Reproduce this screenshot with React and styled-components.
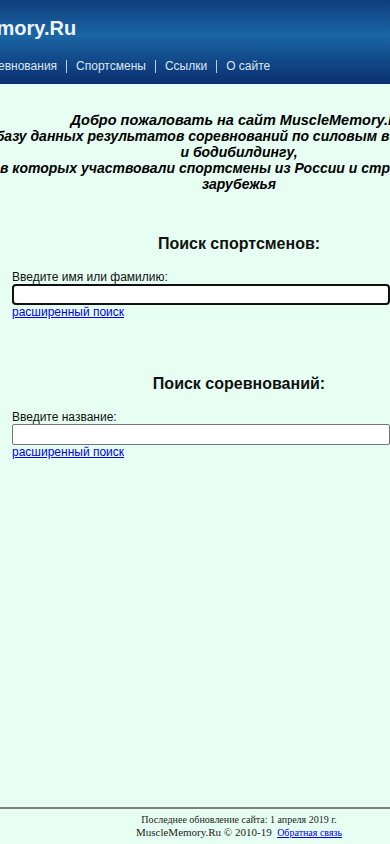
import React from 'react';
import styled, { createGlobalStyle } from 'styled-components';

const GlobalStyle = createGlobalStyle`
    html, body {
        margin: 0;
        padding: 0;
        overflow-x: hidden;
        background: #e6fff2;
    }
    body {
        font-family: "Liberation Sans", Arial, sans-serif;
    }
`;

//styled
const Page = styled.div`
    min-height: 100vh;
    display: flex;
    flex-direction: column;
`;
const Header = styled.header`
    height: 84px;
    background: linear-gradient(to bottom, #0f3d7e 0%, #1a66a4 42%, #134c8c 68%, #0a3070 100%);
    overflow: hidden;
`;
const HeaderInner = styled.div`
    margin-left: -99px;
    display: flex;
    flex-direction: column;
`;
const Logo = styled.div`
    margin-top: 16px;
    font-size: 20px;
    line-height: 24px;
    font-weight: bold;
    color: #eef3fa;
    white-space: nowrap;
`;
const Nav = styled.nav`
    margin-top: 19px;
    padding-left: 75px;
    display: flex;
    align-items: center;
    gap: 9px;
    font-size: 12px;
    line-height: 14px;
    white-space: nowrap;
`;
const NavLink = styled.span`
    color: #dde7f3;
`;
const Sep = styled.span`
    width: 1px;
    height: 13px;
    background: #b9cde6;
`;
const Content = styled.main`
    margin-left: 12px;
    width: 454px;
    display: flex;
    flex-direction: column;
`;
const Welcome = styled.div`
    margin-top: 28px;
    display: flex;
    flex-direction: column;
    align-items: center;
    line-height: 16px;
    font-weight: bold;
    font-style: italic;
    color: #000;
`;
const Line = styled.span`
    white-space: nowrap;
    font-size: ${props => props.lead ? '14.5px' : '14px'};
`;
const Section = styled.section`
    margin-top: ${props => props.top}px;
    display: flex;
    flex-direction: column;
`;
const Title = styled.h3`
    margin: 0 0 15px;
    font-size: 16px;
    line-height: 22px;
    font-weight: bold;
    text-align: center;
    color: #111;
`;
const Label = styled.label`
    font-size: 12px;
    line-height: 14px;
    color: #111;
`;
const Field = styled.input`
    box-sizing: border-box;
    width: 378px;
    height: 21px;
    margin: 0;
    padding: 1px 2px;
    background: #fff;
    font-size: 13px;
    border: ${props => props.active ? '2px solid #101010' : '1px solid #767676'};
    border-radius: ${props => props.active ? '4px' : '2px'};
    outline: none;
`;
const More = styled.a`
    align-self: flex-start;
    font-size: 12px;
    line-height: 14px;
    color: #0000ee;
    text-decoration: underline;
    cursor: pointer;
`;
const Footer = styled.footer`
    margin-top: auto;
    border-top: 2px solid #808080;
    padding: 4px 0 5px;
`;
const FooterText = styled.div`
    margin-left: 12px;
    width: 454px;
    text-align: center;
    font-family: "Liberation Serif", "Times New Roman", serif;
    font-size: 11px;
    line-height: 12px;
    color: #222;
`;
const Small = styled.span`
    font-size: 10px;
`;
const FooterLink = styled.a`
    font-size: 10px;
    color: #0000ee;
    text-decoration: underline;
`;

const navItems = ['Соревнования', 'Спортсмены', 'Ссылки', 'О сайте'];

const SearchBlock = ({ top, title, label, active }) => (
    <Section top={top}>
        <Title>{title}</Title>
        <Label>{label}</Label>
        <Field type="text" active={active} />
        <More>расширенный поиск</More>
    </Section>
);

//  ****************************************************
const App = () => {
    return (
        <>
        <GlobalStyle />
        <Page>
            <Header>
                <HeaderInner>
                    <Logo>MuscleMemory.Ru</Logo>
                    <Nav>
                        {navItems.map((item, i) => (
                            <React.Fragment key={item}>
                                {i > 0 && <Sep />}
                                <NavLink>{item}</NavLink>
                            </React.Fragment>
                        ))}
                    </Nav>
                </HeaderInner>
            </Header>
            <Content>
                <Welcome>
                    <Line lead>Добро пожаловать на сайт MuscleMemory.Ru</Line>
                    <Line>базу данных результатов соревнований по силовым видам спорта</Line>
                    <Line>и бодибилдингу,</Line>
                    <Line>в которых участвовали спортсмены из России и стран ближнего</Line>
                    <Line>зарубежья</Line>
                </Welcome>
                <SearchBlock top={41}
                    title="Поиск спортсменов:"
                    label="Введите имя или фамилию:"
                    active
                />
                <SearchBlock top={54}
                    title="Поиск соревнований:"
                    label="Введите название:"
                />
            </Content>
            <Footer>
                <FooterText>
                    <Small>Последнее обновление сайта: 1 апреля 2019 г.</Small><br />
                    MuscleMemory.Ru © 2010-19&nbsp; <FooterLink>Обратная связь</FooterLink>
                </FooterText>
            </Footer>
        </Page>
        </>
    );
}
export default App;
